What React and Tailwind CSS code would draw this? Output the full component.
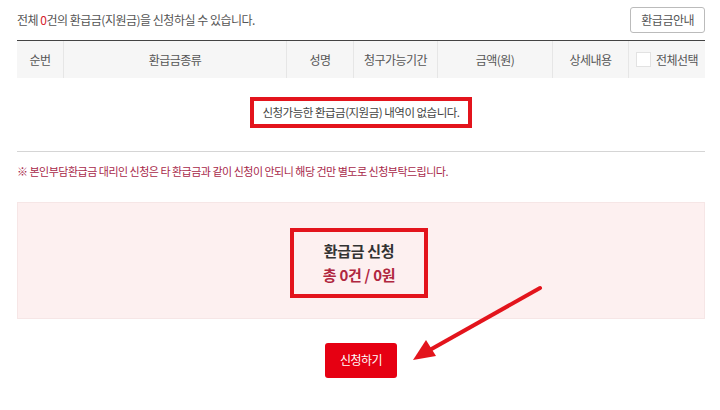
import React from 'react';

const columns = [
  { label: '순번', w: 'w-[46px]' },
  { label: '환급금종류', w: 'w-[223px]' },
  { label: '성명', w: 'w-[67px]' },
  { label: '청구가능기간', w: 'w-[84px]' },
  { label: '금액(원)', w: 'w-[115px]' },
  { label: '상세내용', w: 'w-[76px]' },
];

export default function App() {
  return (
    <div
      className="relative w-[720px] h-[410px] overflow-hidden bg-white text-[12px] text-[#555]"
      style={{ fontFamily: '"Noto Sans CJK KR", "Noto Sans", sans-serif' }}
    >
      <div className="pl-[17px] pr-[15px]">
        {/* Top line */}
        <div className="flex items-center justify-between pt-[7px] h-[33px]">
          <p className="tracking-[-0.5px]">
            전체 <span className="text-[#d6202a]">0</span>건의 환급금(지원금)을 신청하실 수 있습니다.
          </p>
          <button className="h-[26px] px-[10px] border border-[#bbb] rounded-[3px] bg-white text-[#555] text-[12px] tracking-[-0.5px]">
            환급금안내
          </button>
        </div>

        {/* Table */}
        <div className="mt-[7px] border-t border-[#444]">
          <div className="flex h-[37px] bg-[#f6f6f6] tracking-[-0.5px]">
            {columns.map((c, i) => (
              <div
                key={c.label}
                className={`${c.w} flex items-center justify-center ${i > 0 ? 'border-l border-[#e6e6e6]' : ''}`}
              >
                {c.label}
              </div>
            ))}
            <div className="w-[77px] flex items-center justify-center gap-[5px] border-l border-[#e6e6e6]">
              <span className="w-[15px] h-[15px] bg-white border border-[#e2e2e2]"></span>
              <span>전체선택</span>
            </div>
          </div>
          <div className="h-[74px] flex items-center justify-center border-b border-[#d5d5d5]">
            <div className="w-[222px] h-[31px] mt-[-4px] flex items-center justify-center border-[4px] border-[#e3141c] text-[11.5px] text-[#444] tracking-[-0.5px]">
              신청가능한 환급금(지원금) 내역이 없습니다.
            </div>
          </div>
        </div>

        {/* Note */}
        <p className="mt-[11px] text-[11px] text-[#a8294a] tracking-[-0.5px]">
          ※ 본인부담환급금 대리인 신청은 타 환급금과 같이 신청이 안되니 해당 건만 별도로 신청부탁드립니다.
        </p>

        {/* Summary */}
        <div className="mt-[22px] h-[117px] bg-[#fdf0f0] border border-[#f6e6e6] flex items-center justify-center">
          <div className="w-[138px] h-[70px] mt-[5px] ml-[-4px] border-[4px] border-[#e3141c] flex flex-col items-center justify-center font-bold text-[15px] leading-[24px] tracking-[-0.3px]">
            <span className="text-[#333]">환급금 신청</span>
            <span className="text-[#b0273f]">총 0건 / 0원</span>
          </div>
        </div>

        {/* Submit */}
        <div className="flex justify-center mt-[24px]">
          <button className="w-[72px] h-[35px] rounded-[3px] bg-[#e60012] text-white text-[12px] tracking-[-0.5px]">
            신청하기
          </button>
        </div>
      </div>

      {/* Annotation arrow */}
      <svg className="absolute left-0 top-0" width="720" height="410" viewBox="0 0 720 410">
        <line x1="540" y1="288" x2="428" y2="351" stroke="#e3141c" strokeWidth="4" strokeLinecap="round" />
        <polygon points="413,360 426,340 436,356" fill="#e3141c" />
      </svg>
    </div>
  );
}
